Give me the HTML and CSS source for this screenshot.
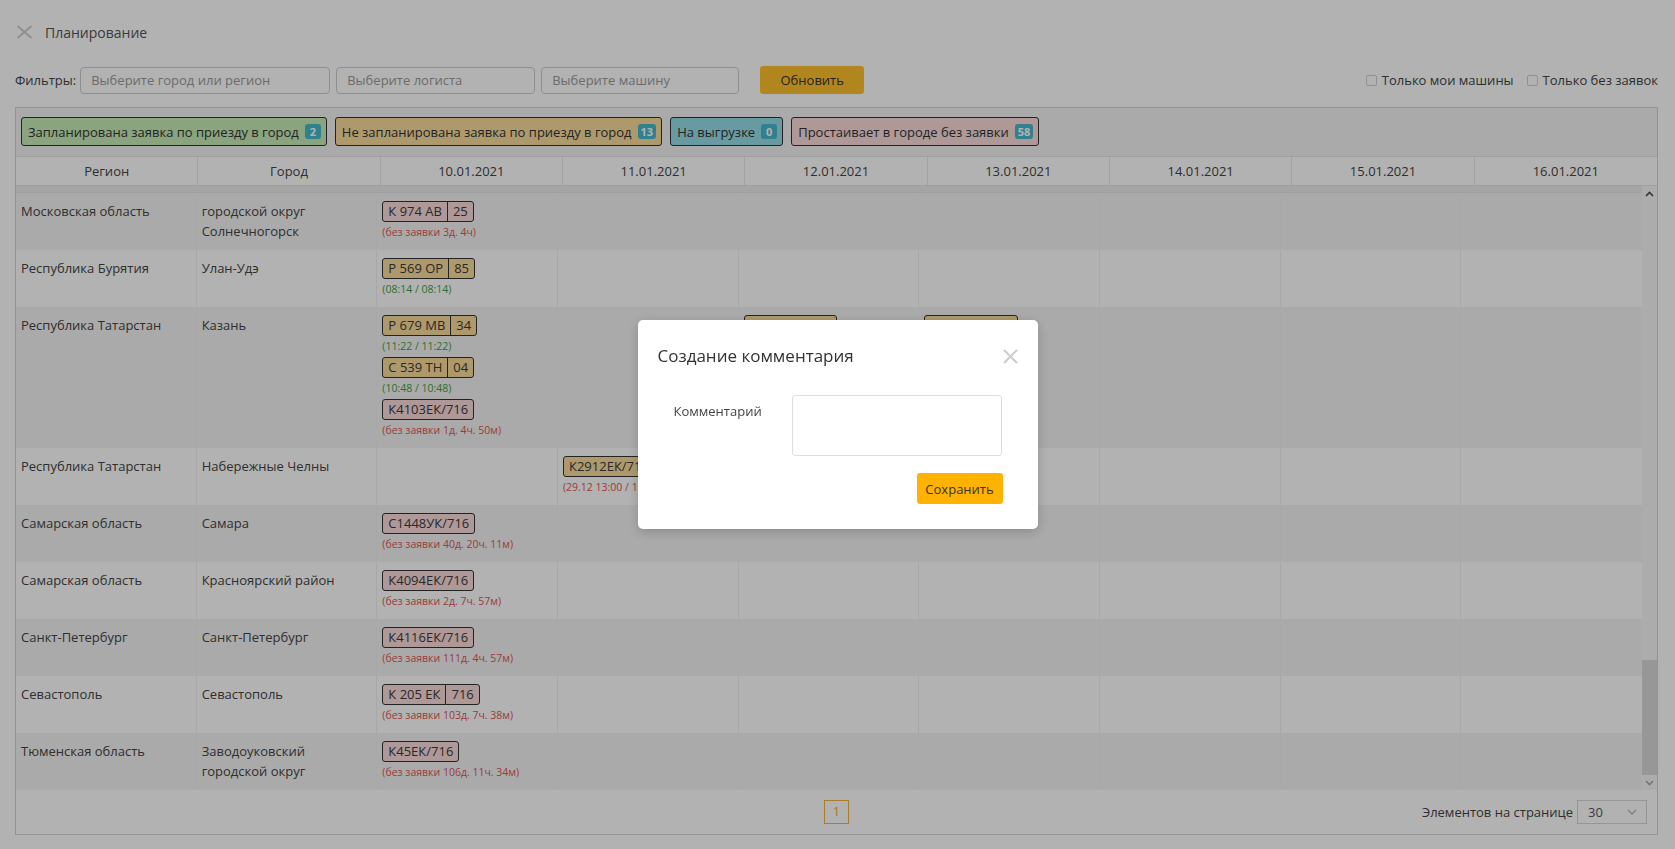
FILE: index.html
```html
<!DOCTYPE html>
<html lang="ru">
<head>
  <meta charset="UTF-8" />
  <title>Планирование</title>
  <link rel="stylesheet" href="styles.css">
</head>
<body>

<div class="page">
  <div class="titlebar">
    <svg class="close-ico" viewBox="0 0 17 14"><path d="M1.5 1l14 12M15.5 1l-14 12" stroke="#cfcfcf" stroke-width="2" fill="none"/></svg>
    <span class="title">Планирование</span>
  </div>

  <div class="filters">
    <span class="filters-label">Фильтры:</span>
    <input class="field field-city" placeholder="Выберите город или регион">
    <input class="field field-logist" placeholder="Выберите логиста">
    <input class="field field-car" placeholder="Выберите машину">
    <button class="btn btn-refresh">Обновить</button>
    <div class="checks">
      <label class="check"><span class="box"></span>Только мои машины</label>
      <label class="check"><span class="box"></span>Только без заявок</label>
    </div>
  </div>

  <div class="panel">
    <div class="legend">
      <span class="chip chip-green">Запланирована заявка по приезду в город <b class="badge">2</b></span>
      <span class="chip chip-tan">Не запланирована заявка по приезду в город <b class="badge">13</b></span>
      <span class="chip chip-teal">На выгрузке <b class="badge">0</b></span>
      <span class="chip chip-pink">Простаивает в городе без заявки <b class="badge">58</b></span>
    </div>

    <div class="thead">
      <div class="th">Регион</div>
      <div class="th">Город</div>
      <div class="th">10.01.2021</div>
      <div class="th">11.01.2021</div>
      <div class="th">12.01.2021</div>
      <div class="th">13.01.2021</div>
      <div class="th">14.01.2021</div>
      <div class="th">15.01.2021</div>
      <div class="th">16.01.2021</div>
    </div>

    <div class="tbody">
      <div class="rows">
        <div class="row-cut"></div>

        <div class="row">
          <div class="td">Московская область</div>
          <div class="td">городской округ Солнечногорск</div>
          <div class="td">
            <div class="item"><span class="plate pink"><span>К 974 АВ</span><span>25</span></span><div class="time red">(без заявки 3д. 4ч)</div></div>
          </div>
          <div class="td"></div><div class="td"></div><div class="td"></div><div class="td"></div><div class="td"></div><div class="td"></div>
        </div>

        <div class="row">
          <div class="td">Республика Бурятия</div>
          <div class="td">Улан-Удэ</div>
          <div class="td">
            <div class="item"><span class="plate tan"><span>Р 569 ОР</span><span>85</span></span><div class="time green">(08:14 / 08:14)</div></div>
          </div>
          <div class="td"></div><div class="td"></div><div class="td"></div><div class="td"></div><div class="td"></div><div class="td"></div>
        </div>

        <div class="row">
          <div class="td">Республика Татарстан</div>
          <div class="td">Казань</div>
          <div class="td">
            <div class="item"><span class="plate tan"><span>Р 679 МВ</span><span>34</span></span><div class="time green">(11:22 / 11:22)</div></div>
            <div class="item"><span class="plate tan"><span>С 539 ТН</span><span>04</span></span><div class="time green">(10:48 / 10:48)</div></div>
            <div class="item"><span class="plate pink"><span>К4103ЕК/716</span></span><div class="time red">(без заявки 1д. 4ч. 50м)</div></div>
          </div>
          <div class="td"></div>
          <div class="td">
            <div class="item"><span class="plate tan plate-hidden"></span></div>
          </div>
          <div class="td">
            <div class="item"><span class="plate tan plate-hidden wide"></span></div>
          </div>
          <div class="td"></div><div class="td"></div><div class="td"></div>
        </div>

        <div class="row">
          <div class="td">Республика Татарстан</div>
          <div class="td">Набережные Челны</div>
          <div class="td"></div>
          <div class="td">
            <div class="item"><span class="plate tan"><span>К2912ЕК/716</span></span><div class="time red">(29.12 13:00 / 11.01 09:00)</div></div>
          </div>
          <div class="td"></div><div class="td"></div><div class="td"></div><div class="td"></div><div class="td"></div>
        </div>

        <div class="row">
          <div class="td">Самарская область</div>
          <div class="td">Самара</div>
          <div class="td">
            <div class="item"><span class="plate pink"><span>С1448УК/716</span></span><div class="time red">(без заявки 40д. 20ч. 11м)</div></div>
          </div>
          <div class="td"></div><div class="td"></div><div class="td"></div><div class="td"></div><div class="td"></div><div class="td"></div>
        </div>

        <div class="row">
          <div class="td">Самарская область</div>
          <div class="td">Красноярский район</div>
          <div class="td">
            <div class="item"><span class="plate pink"><span>К4094ЕК/716</span></span><div class="time red">(без заявки 2д. 7ч. 57м)</div></div>
          </div>
          <div class="td"></div><div class="td"></div><div class="td"></div><div class="td"></div><div class="td"></div><div class="td"></div>
        </div>

        <div class="row">
          <div class="td">Санкт-Петербург</div>
          <div class="td">Санкт-Петербург</div>
          <div class="td">
            <div class="item"><span class="plate pink"><span>К4116ЕК/716</span></span><div class="time red">(без заявки 111д. 4ч. 57м)</div></div>
          </div>
          <div class="td"></div><div class="td"></div><div class="td"></div><div class="td"></div><div class="td"></div><div class="td"></div>
        </div>

        <div class="row">
          <div class="td">Севастополь</div>
          <div class="td">Севастополь</div>
          <div class="td">
            <div class="item"><span class="plate pink"><span>К 205 ЕК</span><span>716</span></span><div class="time red">(без заявки 103д. 7ч. 38м)</div></div>
          </div>
          <div class="td"></div><div class="td"></div><div class="td"></div><div class="td"></div><div class="td"></div><div class="td"></div>
        </div>

        <div class="row">
          <div class="td">Тюменская область</div>
          <div class="td">Заводоуковский городской округ</div>
          <div class="td">
            <div class="item"><span class="plate pink"><span>К45ЕК/716</span></span><div class="time red">(без заявки 106д. 11ч. 34м)</div></div>
          </div>
          <div class="td"></div><div class="td"></div><div class="td"></div><div class="td"></div><div class="td"></div><div class="td"></div>
        </div>
      </div>

      <div class="vscroll">
        <div class="sb-btn"><svg width="9" height="6" viewBox="0 0 9 6"><path d="M1 5l3.5-3.5L8 5" stroke="#4a4a4a" stroke-width="1.6" fill="none"/></svg></div>
        <div class="sb-track"><div class="sb-thumb"></div></div>
        <div class="sb-btn"><svg width="9" height="6" viewBox="0 0 9 6"><path d="M1 1l3.5 3.5L8 1" stroke="#a8a8a8" stroke-width="1.6" fill="none"/></svg></div>
      </div>
    </div>

    <div class="pager">
      <div></div>
      <span class="page-btn">1</span>
      <div class="per-page">
        Элементов на странице
        <span class="select">30 <svg width="10" height="6" viewBox="0 0 10 6"><path d="M1 1l4 4 4-4" stroke="#b5b5b5" stroke-width="1.3" fill="none"/></svg></span>
      </div>
    </div>
  </div>
</div>

<div class="overlay">
  <div class="modal">
    <div class="modal-head">
      <span class="modal-title">Создание комментария</span>
      <svg class="modal-close" viewBox="0 0 15 15"><path d="M1 1l13 13M14 1L1 14" stroke="#cccccc" stroke-width="2" fill="none"/></svg>
    </div>
    <div class="modal-form">
      <label class="modal-label">Комментарий</label>
      <textarea class="modal-text"></textarea>
    </div>
    <div class="modal-foot">
      <button class="btn btn-save">Сохранить</button>
    </div>
  </div>
</div>

</body>
</html>
```

FILE: styles.css
```css
* {
  box-sizing: border-box;
}
html, body {
  margin: 0;
}
body {
  font-family: 'Open Sans', 'Noto Sans', sans-serif;
  font-size: 13px;
  color: #444;
  background-color: #fff;
  width: 1675px;
  height: 849px;
  overflow: hidden;
}
.page {
  padding: 0 17px 0 15px;
}

/* title */
.titlebar {
  height: 64px;
  display: flex;
  align-items: center;
  padding-left: 1px;
}
.close-ico {
  width: 17px;
  height: 14px;
  margin-right: 12px;
}
.title {
  font-size: 14px;
  color: #555;
}

/* filters */
.filters {
  height: 32px;
  display: flex;
  align-items: center;
}
.filters-label {
  margin: 0 4px 0 0;
  color: #444;
}
.field {
  height: 27px;
  border: 1px solid #cdcdcd;
  border-radius: 4px;
  padding: 0 10px;
  font-family: inherit;
  font-size: 13px;
  color: #444;
  margin-right: 6px;
  outline: none;
}
.field::placeholder {
  color: #9a9a9a;
}
.field-city { width: 250px; }
.field-logist { width: 199px; }
.field-car { width: 198px; }
.btn {
  border: none;
  border-radius: 3px;
  font-family: inherit;
  font-size: 13px;
  color: #333;
  background-color: #ffb300;
  cursor: pointer;
}
.btn-refresh {
  margin-left: 15px;
  width: 104px;
  height: 28px;
  background-color: #ffc12c;
}
.checks {
  margin-left: auto;
  display: flex;
  gap: 13px;
  color: #444;
}
.check {
  display: flex;
  align-items: center;
  gap: 5px;
}
.box {
  width: 11px;
  height: 11px;
  border: 1px solid #cfcfcf;
  border-radius: 2px;
  background: #fff;
}

/* panel */
.panel {
  margin-top: 11px;
  border: 1px solid #d3d3d3;
}
.legend {
  display: flex;
  gap: 8px;
  padding: 9px 5px 10px;
  background-color: #f4f4f4;
  border-bottom: 1px solid #e6e6e6;
}
.chip {
  display: inline-flex;
  align-items: center;
  gap: 6px;
  height: 29px;
  padding: 0 5px 0 6px;
  border: 1px solid #333;
  border-radius: 3px;
  color: #333;
}
.chip-green { background-color: #c5ebb5; }
.chip-tan { background-color: #f9dc9b; }
.chip-teal { background-color: #96dde7; }
.chip-pink { background-color: #fadada; }
.badge {
  display: inline-block;
  min-width: 16px;
  height: 15px;
  padding: 0 3px;
  border-radius: 3px;
  background-color: #45b8cc;
  color: #fff;
  font-size: 11px;
  line-height: 15px;
  text-align: center;
}

.thead {
  display: grid;
  grid-template-columns: repeat(9, 1fr);
  height: 29px;
  border-bottom: 1px solid #e6e6e6;
}
.th {
  line-height: 28px;
  text-align: center;
  border-right: 1px solid #e9e9e9;
}
.th:last-child {
  border-right: none;
}

.tbody {
  display: grid;
  grid-template-columns: 1fr 15px;
}
.row-cut {
  height: 7px;
  background-color: #ececec;
  border-bottom: 1px solid #e4e4e4;
}
.row {
  display: grid;
  grid-template-columns: repeat(9, 1fr);
}
.row:nth-child(even) {
  background-color: #f4f4f4;
}
.td {
  padding: 8px 5px;
  line-height: 20px;
  border-right: 1px solid #f1f1f1;
}
.td:last-child {
  border-right: none;
}
.item + .item {
  margin-top: 1px;
}
.plate {
  display: inline-flex;
  border: 1px solid #333;
  border-radius: 3px;
  line-height: 19px;
  color: #3a3a3a;
}
.plate span {
  padding: 0 5px;
}
.plate span + span {
  border-left: 1px solid #333;
}
.plate.pink { background-color: #fadada; }
.plate.tan { background-color: #f9dc9b; }
.plate-hidden {
  width: 93px;
  height: 21px;
  vertical-align: top;
}
.plate-hidden.wide {
  width: 94px;
}
.time {
  font-size: 10.5px;
  line-height: 20px;
}
.time.red { color: #e05555; }
.time.green { color: #3f9f43; }

.vscroll {
  display: flex;
  flex-direction: column;
  background-color: #f6f6f6;
}
.sb-btn {
  height: 15px;
  display: flex;
  align-items: center;
  justify-content: center;
}
.sb-track {
  flex: 1;
  display: flex;
  flex-direction: column;
  justify-content: flex-end;
}
.sb-thumb {
  height: 115px;
  background-color: #d8d8d8;
}

.pager {
  display: grid;
  grid-template-columns: 1fr auto 1fr;
  align-items: center;
  height: 44px;
  padding: 0 10px;
}
.page-btn {
  width: 25px;
  height: 24px;
  border: 1px solid #f2b33d;
  color: #e8a632;
  font-size: 12px;
  line-height: 22px;
  text-align: center;
}
.per-page {
  justify-self: end;
  display: flex;
  align-items: center;
  gap: 4px;
  color: #444;
}
.select {
  width: 70px;
  height: 24px;
  border: 1px solid #d7d7d7;
  display: flex;
  align-items: center;
  justify-content: space-between;
  padding: 0 9px 0 10px;
  color: #555;
}

/* modal */
.overlay {
  position: fixed;
  inset: 0;
  background-color: rgba(0, 0, 0, 0.3);
  display: flex;
  align-items: center;
  justify-content: center;
}
.modal {
  width: 400px;
  background-color: #fff;
  border-radius: 5px;
  padding-bottom: 25px;
  box-shadow: 0 3px 12px rgba(0,0,0,0.2);
}
.modal-head {
  display: flex;
  justify-content: space-between;
  align-items: center;
  padding: 24px 20px 0;
}
.modal-title {
  font-size: 17px;
  line-height: 24px;
  color: #333;
}
.modal-close {
  width: 15px;
  height: 15px;
}
.modal-form {
  display: flex;
  margin-top: 27px;
  padding: 0 36px;
}
.modal-label {
  width: 118px;
  padding-top: 6px;
  font-size: 13px;
  line-height: 20px;
  color: #444;
}
.modal-text {
  width: 210px;
  height: 61px;
  border: 1px solid #dedede;
  border-radius: 3px;
  resize: none;
}
.modal-foot {
  display: flex;
  justify-content: flex-end;
  padding: 0 35px;
  margin-top: 17px;
}
.btn-save {
  width: 86px;
  height: 31px;
}
```
